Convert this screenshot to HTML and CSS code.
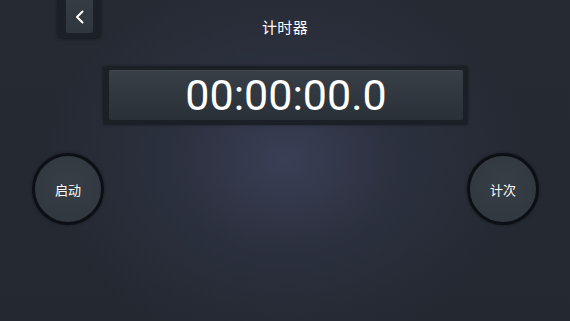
FILE: index.html
```html
<!DOCTYPE html>
<html lang="zh">
<head>
<meta charset="utf-8">
<title>计时器</title>
<link rel="stylesheet" href="styles.css">
</head>
<body>
<div class="app">
  <header class="topbar">
    <div class="back-frame">
      <button class="back" aria-label="返回">
        <svg width="12" height="14" viewBox="0 0 12 14"><path d="M8.5 1.5 L3 7 L8.5 12.5" fill="none" stroke="#ffffff" stroke-width="2" stroke-linecap="round" stroke-linejoin="round"/></svg>
      </button>
    </div>
    <h1 class="title">计时器</h1>
    <div></div>
  </header>
  <div class="timer-frame">
    <div class="timer">00:00:00.0</div>
  </div>
  <div class="controls">
    <button class="round">启动</button>
    <button class="round">计次</button>
  </div>
</div>
</body>
</html>
```
FILE: styles.css
```css
html, body {
  margin: 0;
  padding: 0;
}
body {
  width: 570px;
  height: 321px;
  overflow: hidden;
  font-family: "Noto Sans CJK SC", "Noto Sans", sans-serif;
}
.app {
  width: 570px;
  height: 321px;
  display: flex;
  flex-direction: column;
  background:
    radial-gradient(ellipse 240px 190px at 285px 160px, rgba(60, 64, 88, 0.95) 0%, rgba(50, 54, 72, 0.6) 45%, rgba(40, 45, 58, 0) 100%),
    linear-gradient(#252a33, #232831);
}
.topbar {
  height: 38px;
  display: grid;
  grid-template-columns: 1fr auto 1fr;
  align-items: start;
}
.back-frame {
  justify-self: start;
  margin-left: 57px;
  width: 44px;
  height: 38px;
  box-sizing: border-box;
  padding: 0 8px 5px 9px;
  background: #1c2128;
  border-radius: 0 0 6px 6px;
  box-shadow: 0 1px 3px rgba(10, 12, 16, 0.6);
}
.back {
  display: flex;
  align-items: center;
  justify-content: center;
  width: 27px;
  height: 33px;
  padding: 0;
  border: none;
  border-radius: 0 0 3px 3px;
  background: linear-gradient(#363c43, #30363d);
}
.title {
  margin: 0;
  padding-top: 17px;
  font-size: 15px;
  line-height: 20px;
  font-weight: 400;
  color: #ffffff;
  letter-spacing: 0.3px;
}
.timer-frame {
  align-self: center;
  margin-top: 28px;
  width: 365px;
  height: 59px;
  box-sizing: border-box;
  padding: 4px 5px 5px 6px;
  background: #1b2027;
  border-radius: 3px;
  box-shadow: 0 0 3px rgba(10, 12, 16, 0.5);
}
.timer {
  height: 50px;
  display: flex;
  align-items: center;
  justify-content: center;
  background: linear-gradient(#383f47, #2a3037);
  border-radius: 2px;
  box-shadow: inset 0 1px 0 rgba(255, 255, 255, 0.05);
  font-family: Roboto, "Noto Sans", sans-serif;
  font-size: 43px;
  color: #ffffff;
  line-height: 50px;
  padding-left: 1px;
}
.controls {
  display: flex;
  justify-content: space-between;
  margin-top: 28px;
  padding: 0 31px 0 32px;
}
.round {
  width: 72px;
  height: 72px;
  box-sizing: border-box;
  border-radius: 50%;
  border: 3px solid #0c0f13;
  background: radial-gradient(circle at 50% 40%, #373e45, #30363d);
  box-shadow: 0 0 3px rgba(10, 12, 16, 0.5);
  color: #ffffff;
  font-family: "Noto Sans CJK SC", "Noto Sans", sans-serif;
  font-size: 13px;
  padding: 0;
}
```
